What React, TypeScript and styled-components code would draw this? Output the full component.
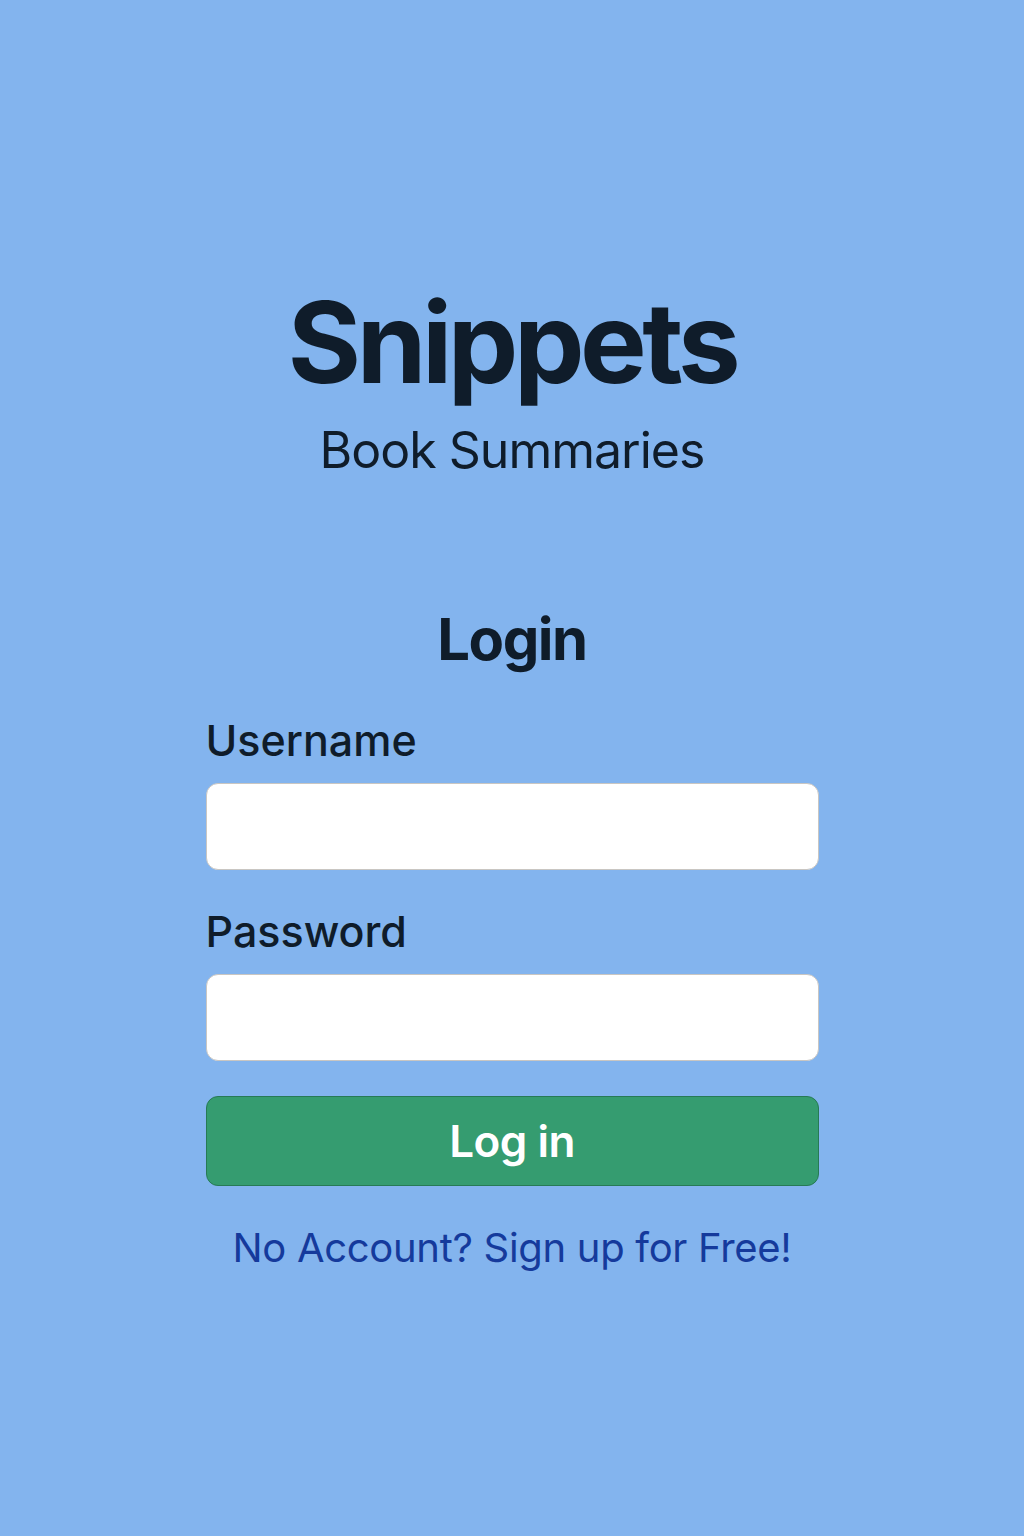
import React from "react";
import styled, { createGlobalStyle } from "styled-components";

const GlobalStyle = createGlobalStyle`
  html, body {
    margin: 0;
    padding: 0;
    background: #83b4ee;
  }
  body {
    font-family: Inter, "Noto Sans", sans-serif;
    color: #0f1c2a;
  }
`;

const Page = styled.div`
  min-height: 1536px;
  display: flex;
  flex-direction: column;
  align-items: center;
  padding-top: 286px;
  box-sizing: border-box;
`;

const Brand = styled.h1`
  margin: 0;
  font-size: 112px;
  line-height: 1;
  font-weight: 700;
  letter-spacing: -4.5px;
`;

const Tagline = styled.p`
  margin: 27px 0 0;
  font-size: 50px;
  line-height: 1;
  font-weight: 400;
  letter-spacing: -1px;
`;

const Form = styled.form`
  width: 613px;
  margin-top: 135px;
  display: flex;
  flex-direction: column;
`;

const Heading = styled.h2`
  margin: 0 0 51px;
  text-align: center;
  font-size: 58px;
  line-height: 1;
  font-weight: 700;
  letter-spacing: -1.5px;
`;

const Label = styled.label<{ gap?: number }>`
  margin-top: ${(p) => p.gap ?? 0}px;
  font-size: 43px;
  line-height: 1;
  font-weight: 500;
`;

const Input = styled.input`
  margin-top: 21px;
  height: 87px;
  box-sizing: border-box;
  border: 1px solid #c9c6c2;
  border-radius: 12px;
  background: #fff;
  font-size: 32px;
  padding: 0 20px;
  outline: none;
`;

const Button = styled.button`
  margin-top: 35px;
  height: 90px;
  border: 1px solid #277a55;
  border-radius: 12px;
  background: #359c70;
  color: #fff;
  font-family: Inter, sans-serif;
  font-size: 44px;
  font-weight: 600;
  letter-spacing: -0.5px;
  cursor: pointer;
`;

const SignUp = styled.a`
  margin-top: 42px;
  text-align: center;
  font-size: 40px;
  line-height: 1;
  letter-spacing: -0.3px;
  color: #153a9c;
  text-decoration: none;
`;

export default function App() {
  return (
    <>
      <GlobalStyle />
      <Page>
        <Brand>Snippets</Brand>
        <Tagline>Book Summaries</Tagline>
        <Form onSubmit={(e) => e.preventDefault()}>
          <Heading>Login</Heading>
          <Label htmlFor="username">Username</Label>
          <Input id="username" type="text" />
          <Label htmlFor="password" gap={40}>Password</Label>
          <Input id="password" type="password" />
          <Button type="submit">Log in</Button>
          <SignUp href="#">No Account? Sign up for Free!</SignUp>
        </Form>
      </Page>
    </>
  );
}
